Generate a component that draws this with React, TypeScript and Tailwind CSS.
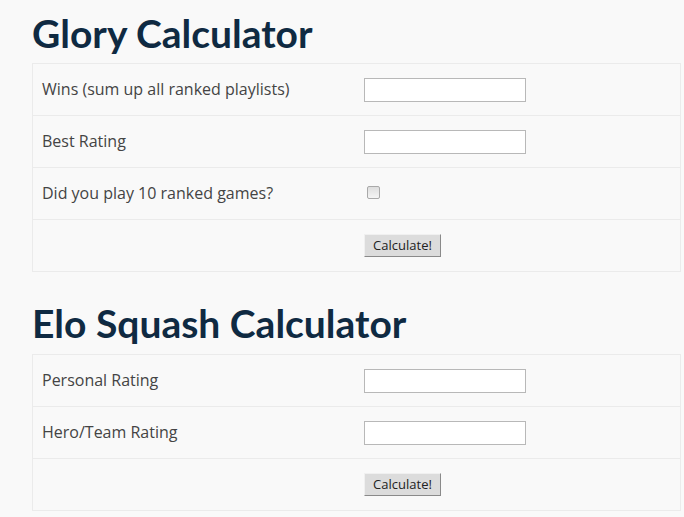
import React from 'react';

type Field = { label: string; kind: 'text' | 'checkbox' };

const GLORY_FIELDS: Field[] = [
  { label: 'Wins (sum up all ranked playlists)', kind: 'text' },
  { label: 'Best Rating', kind: 'text' },
  { label: 'Did you play 10 ranked games?', kind: 'checkbox' },
];

const ELO_FIELDS: Field[] = [
  { label: 'Personal Rating', kind: 'text' },
  { label: 'Hero/Team Rating', kind: 'text' },
];

const Row = ({ children, label }: { children: React.ReactNode; label?: string }) => (
  <div className="flex h-[52px] items-center border-t border-[#ebebeb]">
    <div className="-mt-px w-[331px] shrink-0 pl-[9px] text-[16px] text-[#444444]">{label}</div>
    <div className="flex items-center">{children}</div>
  </div>
);

const Calculator = ({ title, fields, first }: { title: string; fields: Field[]; first?: boolean }) => (
  <section className={first ? 'mt-[10px]' : 'mt-[29px]'}>
    <h1
      className="h-[44px] text-[39px] font-bold leading-[44px] text-[#0f2a42]"
      style={{ fontFamily: 'Lato, "Open Sans", sans-serif' }}
    >
      {title}
    </h1>
    <div className={`${first ? 'mt-[8px]' : 'mt-[9px]'} w-[649px] border-x border-b border-[#ebebeb] bg-[#f9f9f9]`}>
      {fields.map((f) => (
        <Row key={f.label} label={f.label}>
          {f.kind === 'text' ? (
            <input
              type="text"
              className="h-[24px] w-[162px] border border-[#b8b8b8] bg-white px-1 text-[13px] outline-none"
            />
          ) : (
            <input
              type="checkbox"
              className="ml-[3px] -mt-[3px] h-[13px] w-[13px] appearance-none rounded-[2px] border border-[#a9a9a9] bg-gradient-to-b from-[#dedede] to-[#f4f4f4]"
            />
          )}
        </Row>
      ))}
      <Row>
        <button
          type="button"
          className="h-[23px] w-[77px] border border-t-[#f0f0f0] border-l-[#f0f0f0] border-r-[#8a8a8a] border-b-[#8a8a8a] bg-[#dcdcdc] text-[13px] leading-none text-[#222222]"
        >
          Calculate!
        </button>
      </Row>
    </div>
  </section>
);

export default function App() {
  return (
    <div
      className="min-h-[517px] w-full bg-[#f9f9f9] pl-[32px]"
      style={{ fontFamily: '"Open Sans", "Liberation Sans", sans-serif' }}
    >
      <div className="pt-px">
        <Calculator title="Glory Calculator" fields={GLORY_FIELDS} first />
        <Calculator title="Elo Squash Calculator" fields={ELO_FIELDS} />
      </div>
    </div>
  );
}
